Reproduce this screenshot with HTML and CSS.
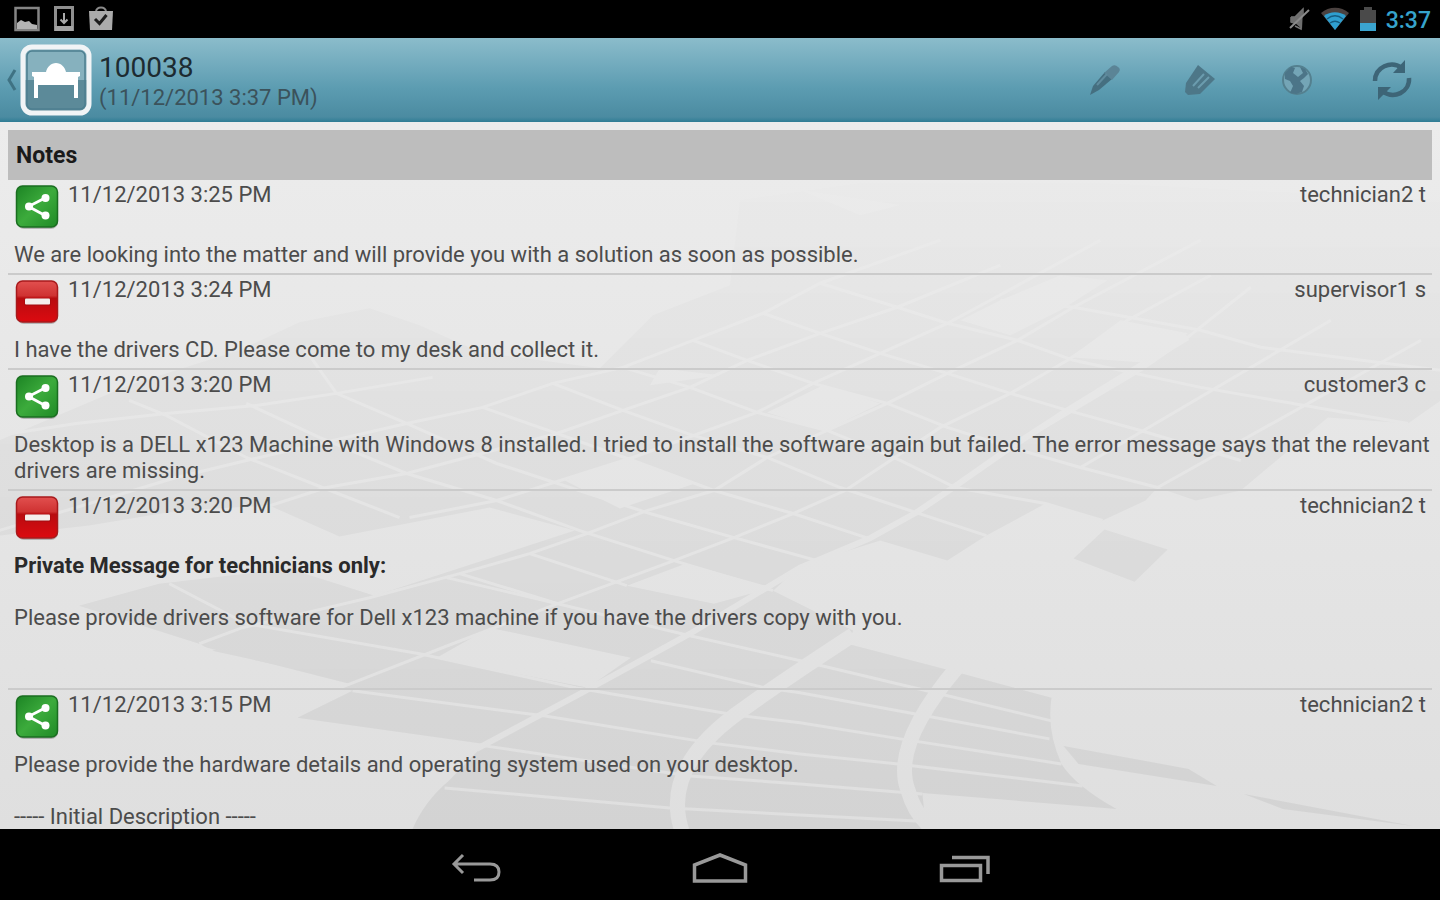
FILE: index.html
```html
<!DOCTYPE html>
<html lang="en">
  <head>
    <meta charset="utf-8">
    <title>100038 - Notes</title>
    <link rel="stylesheet" href="styles.css">
  </head>
  <body>
    <!-- shared icons -->
    <svg class="defs" aria-hidden="true">
      <defs>
        <linearGradient id="greenFill" x1="0" y1="0" x2="1" y2="1">
          <stop offset="0" stop-color="#1c8424" />
          <stop offset="0.5" stop-color="#3cab3c" />
          <stop offset="1" stop-color="#1f8a26" />
        </linearGradient>
        <linearGradient id="redFill" x1="0" y1="0" x2="0" y2="1">
          <stop offset="0" stop-color="#e2504f" />
          <stop offset="0.36" stop-color="#cf3232" />
          <stop offset="0.42" stop-color="#b80c10" />
          <stop offset="1" stop-color="#dc0a10" />
        </linearGradient>
        <symbol id="iconPublic" viewBox="0 0 44 44">
          <rect x="2" y="3" width="41" height="41" rx="7" fill="#000" opacity="0.22" />
          <rect x="1.5" y="1" width="41" height="41" rx="6" fill="url(#greenFill)" stroke="#1a6e20" stroke-width="1.5" />
          <path d="M31 12.5 13.500 21.500 31 31" fill="none" stroke="#fff" stroke-width="2.800" />
          <circle cx="30.500" cy="13" r="4" fill="#fff" />
          <circle cx="14" cy="21.500" r="4" fill="#fff" />
          <circle cx="30.500" cy="30.500" r="4" fill="#fff" />
        </symbol>
        <symbol id="iconPrivate" viewBox="0 0 44 44">
          <rect x="2" y="3" width="41" height="41" rx="7" fill="#000" opacity="0.22" />
          <rect x="1.5" y="1" width="41" height="41" rx="6" fill="url(#redFill)" stroke="#a81a1c" stroke-width="1.5" />
          <rect x="9.500" y="18.500" width="26" height="7" rx="1" fill="#8e0d10" opacity="0.6" />
          <rect x="10" y="18.500" width="25" height="6" rx="1" fill="#f4eeec" />
        </symbol>
      </defs>
    </svg>

    <div class="status-bar">
      <div class="status-left">
        <svg width="26" height="26" viewBox="0 0 26 26">
          <path d="M1.500 2h23v22h-23z" fill="none" stroke="#858585" stroke-width="2.500" />
          <path d="M3 23v-6l4-3 4 2 4-1 3 3 5 1v4z" fill="#b4b4b4" />
        </svg>
        <svg width="20" height="26" viewBox="0 0 20 26">
          <path d="M1.500 1.500h17v22h-17z" fill="none" stroke="#8f8f8f" stroke-width="3" />
          <path d="M1 20h18v5H1z" fill="#a4a4a4" />
          <path d="M10 7v10M6.500 13.500l3.500 3.500 3.500-3.500" fill="none" stroke="#aaa" stroke-width="2" />
        </svg>
        <svg width="26" height="26" viewBox="0 0 26 26">
          <path d="M8 6C8 0 18 0 18 6" fill="none" stroke="#8a8a8a" stroke-width="2" />
          <path d="M1 5h24l-1 19H2z" fill="#ababab" />
          <path d="M7 13l4.500 4.500L18.500 9" fill="none" stroke="#1c1c1c" stroke-width="3" />
        </svg>
      </div>
      <div class="status-right">
        <svg width="22" height="24" viewBox="0 0 22 24">
          <path d="M3 10h4l8-8v6M3 10v5l3 1M7 19l6 3V13" fill="none" stroke="#777" stroke-width="1.500" />
          <path d="M3 10h4l8-8-1 20-7-6H3z" fill="#6f6f6f" />
          <path d="M21 3 2 21" stroke="#8a8a8a" stroke-width="2" />
        </svg>
        <svg width="30" height="24" viewBox="0 0 30 24">
          <path d="M1 6C9-1 21-1 29 6L15 23z" fill="#4b4240" />
          <path d="M4 9c6-5 16-5 22 0L15 23z" fill="#2f9fcf" />
          <path d="M7 12c5-4 11-4 16 0M10 16c3-2 7-2 10 0" fill="none" stroke="#155c80" stroke-width="1.500" />
        </svg>
        <svg width="16" height="24" viewBox="0 0 16 24">
          <path d="M0 3h4V0h8v3h4v21H0z" fill="#4a4a4a" />
          <path d="M0 16h16v8H0z" fill="#3ba4cf" />
        </svg>
        <span class="clock">3:37</span>
      </div>
    </div>

    <header class="app-bar">
      <button type="button" class="up-btn" aria-label="Back to requests">
        <svg width="12" height="22" viewBox="0 0 12 22">
          <path d="M9 1 3 11l6 10" fill="none" stroke="#3f7283" stroke-width="3" />
        </svg>
        <svg width="72" height="72" viewBox="0 0 72 72">
          <rect x="3" y="3" width="66" height="66" rx="9" fill="#5c8a99" />
          <path d="M4 12q0-8 8-8h48q8 0 8 8v24H4z" fill="#86b1be" />
          <rect x="7" y="7" width="58" height="58" rx="5" fill="none" stroke="#4d7f90" stroke-width="1.500" />
          <rect x="3" y="3" width="66" height="66" rx="9" fill="none" stroke="#f1f4f6" stroke-width="5" />
          <path d="M12 28h14c1-5 5-9 10-9s9 4 10 9h14v4l-2 1v21h-4V41H18v13h-4V33l-2-1z" fill="#fff" />
        </svg>
      </button>
      <div class="titles">
        <h1>100038</h1>
        <p>(11/12/2013 3:37 PM)</p>
      </div>
      <nav class="actions">
        <button type="button" aria-label="Edit">
          <svg width="40" height="40" viewBox="0 0 40 40">
            <path d="M6 35l3-9 12-14 7 7-13 11z" fill="#456f80" />
            <path d="M20 13l8-7q3-2 6 1 3 2 1 5l-7 8z" fill="#5b8496" />
            <path d="M13 25l10-11" stroke="#5f8b9d" stroke-width="2" />
          </svg>
        </button>
        <button type="button" aria-label="Add note">
          <svg width="40" height="40" viewBox="0 0 40 40">
            <path d="M18 5l17 14-15 15-12 1-3-3 1-9z" fill="#4d7788" />
            <path d="M13 26 24 14M18 28l11-11" stroke="#6b9cae" stroke-width="2" />
          </svg>
        </button>
        <button type="button" aria-label="Open in browser">
          <svg width="40" height="40" viewBox="0 0 40 40">
            <circle cx="21" cy="20" r="14" fill="#74a5b6" stroke="#54808f" stroke-width="2" />
            <path d="M9 13l6-6 4 1-2 5 5 4 5-4-3-6 5 2 3 5-4 4-4 3 4 5-2 6-6 2-6-1 3-7-3-5-5-2z" fill="#4c7588" />
          </svg>
        </button>
        <button type="button" aria-label="Refresh">
          <svg width="42" height="42" viewBox="0 0 42 42">
            <path d="M4 22C4 8 20 1 31 9M38 19c1 14-15 22-27 13" fill="none" stroke="#3d6577" stroke-width="4.500" />
            <path d="M34 1v13H22zM7 41V28h13z" fill="#3d6577" />
          </svg>
        </button>
      </nav>
    </header>

    <main>
      <!-- faded tile pattern behind the list -->
      <svg class="tiles" viewBox="0 122 1440 706" preserveAspectRatio="xMidYMid slice" aria-hidden="true">
        <defs>
          <linearGradient id="tileFade" gradientUnits="userSpaceOnUse" x1="0" y1="180" x2="0" y2="828">
            <stop offset="0" stop-color="#000" stop-opacity="0.004" />
            <stop offset="0.25" stop-color="#000" stop-opacity="0.018" />
            <stop offset="0.5" stop-color="#000" stop-opacity="0.03" />
            <stop offset="0.75" stop-color="#000" stop-opacity="0.045" />
            <stop offset="1" stop-color="#000" stop-opacity="0.052" />
          </linearGradient>
          <mask id="tileMask" maskUnits="userSpaceOnUse" x="0" y="122" width="1440" height="706">
            <path fill="#fff" d="M0 440 130 385 240 350 300 322 370 308 420 325 480 352 600 368 653 315 730 285 740 200 860 183 1100 183 1440 200V400L1407 423 1327 417 1240 490 1195 500 1157 487 1145 500 1102 520 1045 503 986 535 947 560 880 540 800 565 773 590 853 630 847 643 951 670 1051 697Q1046 730 1061 763 1075 785 1116 808L922 792 925 820 935 828H413Q425 800 449 780L485 743 298 717 353 690 213 650 200 643 80 605 160 583 290 568 375 595 575 530 490 507 340 536 270 505 180 510 90 525 0 535Z" />
            <path fill="#fff" d="M1104 529 1167 549 1134 581 1073 558ZM1063 745 1188 768 1216 785 1078 763ZM1243 793 1412 825 1282 808Z" />
            <!-- missing tiles -->
            <path fill="#000" d="M767 412 823 385 880 403 825 430ZM565 480 630 458 695 483 620 508ZM490 627 631 657 588 687 437 657ZM686 563 773 587 714 603 627 585ZM1120 320 1187 333 1153 363 1070 357ZM1107 280 1060 310 1010 335 960 320 1000 300 1060 275ZM800 190 900 205 860 215ZM660 368 720 375 650 385Z" />
            <path fill="#000" d="M200 645 350 683 298 717 150 700Z" />
            <path fill="#fff" d="M213 650 290 627 415 655 350 680Z" />
            <g fill="none" stroke="#000" stroke-width="3">
              <path d="M343 686 453 643 558 603 674 560 734 537 793 513 845 490 940 427 1010 393 1067 360 1127 320 1210 275" />
              <path d="M200 643 243 627 370 597 460 573 530 553 587 533 647 510 714 490 767 457 827 430 887 403 947 373 1017 340 1073 307 1200 240" />
              <path d="M410 517 497 500 570 477 633 457 757 412 813 383 880 353 947 323 990 300 1100 240" />
              <path d="M100 560 327 487 407 473 557 433 623 410 690 387 747 360 820 333 897 307 1000 265" />
              <path d="M0 530 177 477 247 460 407 423 483 407 553 383 623 367 693 340 763 313 820 283 940 240" />
              <path d="M0 435 77 423 167 413 257 405 337 393 433 377" />
              <path d="M1010 447 1140 370 1187 337 1250 287M1080 467 1330 320M1157 487 1420 340" />
              <path d="M130 400 167 415 247 457 323 487 400 517" />
              <path d="M247 403 320 437 407 473 497 500 580 530 674 560 773 590" />
              <path d="M303 345 337 393 407 423 497 463 570 487 650 513 734 537 817 560" />
              <path d="M483 407 557 433 633 460 714 490 793 513 869 538" />
              <path d="M553 383 623 410 690 434 767 457 840 487 916 512 986 535" />
              <path d="M623 367 690 387 757 412 827 430 900 460 955 487 1045 503 1102 520" />
              <path d="M693 340 747 360 813 383 887 403 947 427 1010 447 1080 467 1157 487" />
              <path d="M763 313 820 333 880 353 947 373 1010 393 1067 410 1140 430 1240 460" />
              <path d="M820 283 897 307 947 323 1017 340 1073 360 1200 387 1407 423" />
              <path d="M1000 300 1073 307 1200 330 1260 347 1440 370" />
              <path d="M447 577 558 603 690 635 809 662 939 693 1051 720" />
              <path d="M170 583 247 623 420 653 576 687 734 714 800 722 900 738 926 742 1061 763" />
              <path d="M460 573 558 603M530 553 627 585M651 660 765 687 800 692 914 713 1049 738" />
              <path d="M353 690 544 715 710 742 800 753 898 763 914 765 1082 785" />
              <path d="M485 745 690 775 800 783 922 793M445 787 670 807 800 814 935 821" />
            </g>
            <g fill="none" stroke="#000" stroke-width="6">
              <path d="M477 748 580 693 690 633 800 567 869 538 916 512 950 489 1010 447 1067 410 1127 373 1187 337" />
            </g>
            <g fill="none" stroke="#000" stroke-width="15">
              <path d="M853 634Q790 675 745 707 660 765 682 830M958 665Q890 745 908 790 915 815 935 830" />
            </g>
          </mask>
        </defs>
        <rect x="0" y="122" width="1440" height="706" fill="url(#tileFade)" mask="url(#tileMask)" />
      </svg>

      <h2>Notes</h2>
      <ul class="notes">
        <li>
          <div class="note-head">
            <svg class="note-icon" role="img" aria-label="Public"><use href="#iconPublic" /></svg>
            <time>11/12/2013 3:25 PM</time>
            <span class="author">technician2 t</span>
          </div>
          <p>We are looking into the matter and will provide you with a solution as soon as possible.</p>
        </li>
        <li>
          <div class="note-head">
            <svg class="note-icon" role="img" aria-label="Private"><use href="#iconPrivate" /></svg>
            <time>11/12/2013 3:24 PM</time>
            <span class="author">supervisor1 s</span>
          </div>
          <p>I have the drivers CD. Please come to my desk and collect it.</p>
        </li>
        <li>
          <div class="note-head">
            <svg class="note-icon" role="img" aria-label="Public"><use href="#iconPublic" /></svg>
            <time>11/12/2013 3:20 PM</time>
            <span class="author">customer3 c</span>
          </div>
          <p>Desktop is a DELL x123 Machine with Windows 8 installed. I tried to install the software again but failed. The error message says that the relevant drivers are missing.</p>
        </li>
        <li>
          <div class="note-head">
            <svg class="note-icon" role="img" aria-label="Private"><use href="#iconPrivate" /></svg>
            <time>11/12/2013 3:20 PM</time>
            <span class="author">technician2 t</span>
          </div>
          <p><b>Private Message for technicians only:</b><br><br>Please provide drivers software for Dell x123 machine if you have the drivers copy with you.<br><br><br></p>
        </li>
        <li>
          <div class="note-head">
            <svg class="note-icon" role="img" aria-label="Public"><use href="#iconPublic" /></svg>
            <time>11/12/2013 3:15 PM</time>
            <span class="author">technician2 t</span>
          </div>
          <p>Please provide the hardware details and operating system used on your desktop.<br><br>----- Initial Description -----</p>
        </li>
      </ul>
    </main>

    <footer class="nav-bar">
      <button type="button" aria-label="Back">
        <svg width="52" height="32" viewBox="0 0 52 32">
          <path d="M13 2 4 11l9 9M4 11h36q9 0 9 8t-9 8H24" fill="none" stroke="#999" stroke-width="3" />
        </svg>
      </button>
      <button type="button" aria-label="Home">
        <svg width="56" height="32" viewBox="0 0 56 32">
          <path d="M2.500 28V12L28 2l25.500 10v16z" fill="none" stroke="#999" stroke-width="3.500" />
        </svg>
      </button>
      <button type="button" aria-label="Recent apps">
        <svg width="52" height="32" viewBox="0 0 52 32">
          <path d="M3.500 12.500h39v15h-39zM14 4.500h36V21" fill="none" stroke="#999" stroke-width="3.500" />
        </svg>
      </button>
    </footer>
  </body>
</html>
```

FILE: styles.css
```css
* {
  box-sizing: border-box;
}

body {
  margin: 0;
  height: 100vh;
  display: flex;
  flex-direction: column;
  background: #000;
  font-family: Roboto, "Noto Sans", sans-serif;
  font-size: 22px;
  line-height: 26px;
  color: #4c4c4c;
}

h1,
h2,
p,
ul {
  margin: 0;
  padding: 0;
}

button {
  padding: 0;
  border: 0;
  background: none;
  cursor: pointer;
}

svg {
  display: block;
  flex: none;
}

.defs {
  position: absolute;
  width: 0;
  height: 0;
}

/* status bar */
.status-bar {
  flex: none;
  height: 38px;
  padding: 0 9px 0 14px;
  display: flex;
  justify-content: space-between;
  align-items: center;
}

.status-left {
  display: flex;
  gap: 14px;
}

.status-right {
  display: flex;
  align-items: center;
  gap: 10px;
}

.clock {
  padding-top: 3px;
  color: #36a3cc;
  font-size: 23px;
  font-weight: 500;
}

/* title bar */
.app-bar {
  flex: none;
  height: 84px;
  padding-left: 6px;
  display: flex;
  align-items: center;
  background: linear-gradient(#8bbccb, #5c9cb1 60%, #4b8ba1 94%, #2f7d95);
}

.up-btn {
  display: flex;
  align-items: center;
  gap: 2px;
}

.titles {
  flex: 1;
  padding: 4px 0 0 7px;
}

.titles h1 {
  font-size: 28px;
  font-weight: 400;
  line-height: 32px;
  color: #1d2b31;
}

.titles p {
  line-height: 28px;
  color: #3b525b;
}

.actions {
  display: flex;
}

.actions button {
  width: 96px;
  height: 84px;
  display: flex;
  justify-content: center;
  align-items: center;
}

/* notes list */
main {
  position: relative;
  flex: 1;
  min-height: 0;
  overflow-y: auto;
  scrollbar-width: none;
  padding: 8px 8px 0;
  background: linear-gradient(#ececec, #dfdfdf);
}

.tiles {
  position: absolute;
  top: 0;
  left: 0;
  width: 100%;
  height: 100%;
}

h2,
.notes {
  position: relative;
}

h2 {
  padding: 2px 0 0 8px;
  background: #bdbdbd;
  color: #1a1a1a;
  font-size: 23px;
  font-weight: 700;
  line-height: 48px;
}

.notes {
  list-style: none;
}

.notes li {
  padding: 2px 0 5px 6px;
  border-bottom: 2px solid #cbcbcb;
}

.notes li:last-child {
  padding-bottom: 0;
  border-bottom: 0;
}

.note-head {
  display: flex;
  height: 60px;
}

.note-icon {
  width: 44px;
  height: 44px;
  margin: 3px 9px 0 1px;
}

.author {
  margin-left: auto;
  padding-right: 6px;
}

.notes b {
  color: #2a2a2a;
}

/* navigation buttons */
.nav-bar {
  flex: none;
  height: 71px;
  display: flex;
  justify-content: center;
  align-items: center;
  gap: 190px;
  padding-top: 8px;
}
```
